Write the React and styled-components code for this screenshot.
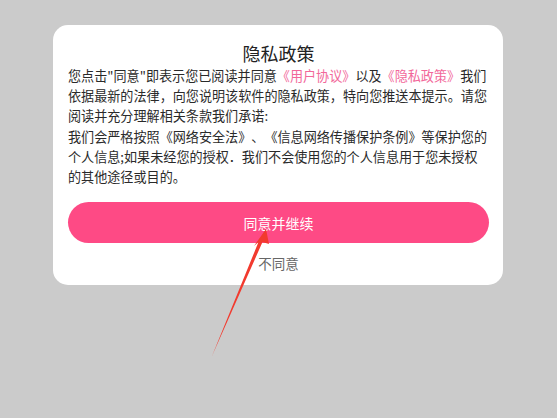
import React from "react";
import styled, { createGlobalStyle } from "styled-components";

const Global = createGlobalStyle`
  html, body { margin: 0; padding: 0; }
  body {
    background: #cbcbcb;
    font-family: "Noto Sans CJK SC", "Noto Sans", sans-serif;
  }
`;

const Page = styled.div`
  position: relative;
  width: 557px;
  height: 418px;
  padding: 25px 0 0 53px;
  box-sizing: border-box;
  background: #cbcbcb;
  overflow: hidden;
`;

const Card = styled.div`
  width: 450px;
  box-sizing: border-box;
  background: #ffffff;
  border-radius: 15px;
  padding: 17px 14px 12px 15px;
  display: flex;
  flex-direction: column;
`;

const Title = styled.h1`
  margin: 0;
  font-size: 18px;
  line-height: 22px;
  font-weight: 400;
  color: #222;
  text-align: center;
`;

const Body = styled.p`
  margin: 2px 0 0;
  font-size: 13.1px;
  line-height: 20.2px;
  color: #2a2a2a;
  white-space: nowrap;
  text-spacing-trim: space-all;
`;

const Link = styled.span`
  color: #f2689a;
`;

const AgreeButton = styled.button`
  margin-top: 15px;
  height: 41px;
  border: none;
  border-radius: 21px;
  background: #fe4a85;
  color: #ffffff;
  font-family: inherit;
  font-size: 14px;
  padding: 0;
  cursor: pointer;
`;

const Decline = styled.div`
  margin-top: 10px;
  text-align: center;
  font-size: 13.5px;
  line-height: 20px;
  color: #666;
`;

const Arrow = styled.svg`
  position: absolute;
  left: 0;
  top: 0;
  pointer-events: none;
`;

export default function App() {
  return (
    <>
      <Global />
      <Page>
        <Card>
          <Title>隐私政策</Title>
          <Body>
            您点击"同意"即表示您已阅读并同意<Link>《用户协议》</Link>以及<Link>《隐私政策》</Link>我们
            <br />
            依据最新的法律，向您说明该软件的隐私政策，特向您推送本提示。请您
            <br />
            阅读并充分理解相关条款我们承诺:
            <br />
            我们会严格按照《网络安全法》、《信息网络传播保护条例》等保护您的
            <br />
            个人信息;如果未经您的授权．我们不会使用您的个人信息用于您未授权
            <br />
            的其他途径或目的。
          </Body>
          <AgreeButton>同意并继续</AgreeButton>
          <Decline>不同意</Decline>
        </Card>
        <Arrow width="557" height="418" viewBox="0 0 557 418">
          <polygon
            points="266,229 269,244 262.5,242 212,356 258.5,242 254,246"
            fill="#f23a2e"
          />
        </Arrow>
      </Page>
    </>
  );
}
